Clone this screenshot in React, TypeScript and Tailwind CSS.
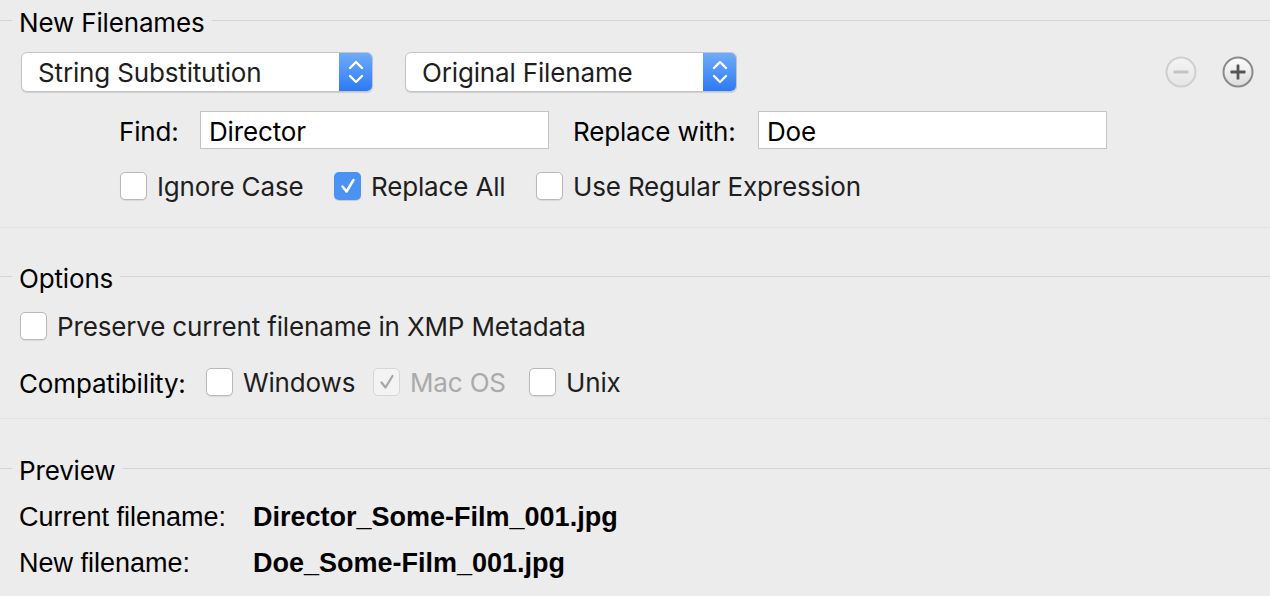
import React from "react";

const ui = { fontFamily: "Inter, 'Noto Sans', sans-serif", letterSpacing: "-0.006em" };
const hel = { fontFamily: "'Liberation Sans', Arial, sans-serif" };

function SectionHeader({ title }: { title: string }) {
  return (
    <div className="flex h-[40px] items-center">
      <div className="h-px w-[12px] bg-[#d5d5d5]" />
      <span className="px-[7px] pt-[6px] text-[26px] leading-[34px] text-black" style={ui}>
        {title}
      </span>
      <div className="h-px flex-1 bg-[#d5d5d5]" />
    </div>
  );
}

function Popup({ label, width }: { label: string; width: string }) {
  return (
    <div
      className={`flex h-[40px] ${width} overflow-hidden rounded-[6px] border border-[#c4c4c4] bg-white shadow-[0_1px_1px_rgba(0,0,0,0.12)]`}
    >
      <div className="flex flex-1 items-center pl-[16px] pt-[1px] text-[26px] text-[#1e1e1e]" style={ui}>
        {label}
      </div>
      <div className="flex w-[33px] items-center justify-center bg-gradient-to-b from-[#6eabf9] to-[#2b79f5]">
        <svg width="16" height="26" viewBox="0 0 16 26" fill="none">
          <path d="M2 9 L8 3 L14 9" stroke="white" strokeWidth="2.4" strokeLinecap="round" strokeLinejoin="round" />
          <path d="M2 17 L8 23 L14 17" stroke="white" strokeWidth="2.4" strokeLinecap="round" strokeLinejoin="round" />
        </svg>
      </div>
    </div>
  );
}

function Checkbox({ checked, disabled }: { checked?: boolean; disabled?: boolean }) {
  if (checked && !disabled) {
    return (
      <div className="flex h-[28px] w-[27px] shrink-0 items-center justify-center rounded-[5px] bg-[#4b92f4] shadow-[0_1px_1px_rgba(0,0,0,0.15)]">
        <svg width="20" height="20" viewBox="0 0 20 20" fill="none">
          <path d="M4.5 10.5 L8.5 15.5 L15.5 4" stroke="white" strokeWidth="2.5" strokeLinecap="round" strokeLinejoin="round" />
        </svg>
      </div>
    );
  }
  return (
    <div
      className={`flex h-[28px] w-[27px] shrink-0 items-center justify-center rounded-[5px] border ${
        disabled ? "border-[#d6d6d6] bg-[#f3f3f3]" : "border-[#b9b9b9] bg-white shadow-[0_1px_1px_rgba(0,0,0,0.08)]"
      }`}
    >
      {checked && (
        <svg width="20" height="20" viewBox="0 0 20 20" fill="none">
          <path d="M4.5 10.5 L8.5 15.5 L15.5 4" stroke="#a6a6a6" strokeWidth="2.2" strokeLinecap="round" strokeLinejoin="round" />
        </svg>
      )}
    </div>
  );
}

function CheckItem({
  label,
  checked,
  disabled,
  width,
}: {
  label: string;
  checked?: boolean;
  disabled?: boolean;
  width?: string;
}) {
  return (
    <div className={`flex items-center ${width ?? ""}`}>
      <Checkbox checked={checked} disabled={disabled} />
      <span
        className={`ml-[10px] whitespace-nowrap pt-[2px] text-[26px] leading-[28px] ${disabled ? "text-[#aaaaaa]" : "text-[#1e1e1e]"}`}
        style={ui}
      >
        {label}
      </span>
    </div>
  );
}

function CircleButton({ plus }: { plus?: boolean }) {
  const ring = plus ? "#8a8a8a" : "#cfcfcf";
  const sym = plus ? "#555555" : "#c4c4c4";
  return (
    <svg width="32" height="32" viewBox="0 0 32 32">
      <defs>
        <linearGradient id={plus ? "gp" : "gm"} x1="0" y1="0" x2="0" y2="1">
          <stop offset="0" stopColor={plus ? "#fdfdfd" : "#f4f4f4"} />
          <stop offset="1" stopColor={plus ? "#dcdcdc" : "#e6e6e6"} />
        </linearGradient>
      </defs>
      <circle cx="16" cy="16" r="14.5" fill={`url(#${plus ? "gp" : "gm"})`} stroke={ring} strokeWidth="2" />
      <rect x="8.5" y="14.6" width="15" height="2.8" rx="0.6" fill={sym} />
      {plus && <rect x="14.6" y="8.5" width="2.8" height="15" rx="0.6" fill={sym} />}
    </svg>
  );
}

export default function App() {
  return (
    <div className="flex h-[596px] w-[1270px] flex-col overflow-hidden bg-[#ececec]">
      <SectionHeader title="New Filenames" />

      <div className="mt-[12px] flex h-[40px] items-center pl-[21px]">
        <Popup label="String Substitution" width="w-[352px]" />
        <div className="ml-[32px]">
          <Popup label="Original Filename" width="w-[332px]" />
        </div>
        <div className="ml-auto mr-[16px] flex items-center gap-[25px]">
          <CircleButton />
          <CircleButton plus />
        </div>
      </div>

      <div className="mt-[19px] flex h-[38px] items-center pl-[119px]">
        <span className="w-[81px] pt-[2px] text-[26px] text-black" style={ui}>
          Find:
        </span>
        <div className="flex h-[38px] w-[349px] items-center border border-[#c3c3c3] bg-white pl-[8px] pt-[3px] text-[26px] text-black" style={ui}>
          Director
        </div>
        <span className="ml-[24px] w-[185px] pt-[2px] text-[26px] text-black" style={ui}>
          Replace with:
        </span>
        <div className="flex h-[38px] w-[349px] items-center border border-[#c3c3c3] bg-white pl-[8px] pt-[3px] text-[26px] text-black" style={ui}>
          Doe
        </div>
      </div>

      <div className="mt-[23px] flex h-[28px] items-center pl-[120px]">
        <CheckItem label="Ignore Case" width="w-[214px]" />
        <CheckItem label="Replace All" checked width="w-[202px]" />
        <CheckItem label="Use Regular Expression" />
      </div>

      <div className="mt-[27px] h-px bg-[#e2e2e2]" />

      <div className="mt-[28px]">
        <SectionHeader title="Options" />
      </div>

      <div className="mt-[16px] flex h-[28px] items-center pl-[20px]">
        <CheckItem label="Preserve current filename in XMP Metadata" />
      </div>

      <div className="mt-[28px] flex h-[28px] items-center pl-[19px]">
        <span className="w-[187px] pt-[2px] text-[26px] text-black" style={ui}>
          Compatibility:
        </span>
        <CheckItem label="Windows" width="w-[167px]" />
        <CheckItem label="Mac OS" checked disabled width="w-[156px]" />
        <CheckItem label="Unix" />
      </div>

      <div className="mt-[22px] h-px bg-[#e2e2e2]" />

      <div className="mt-[29px]">
        <SectionHeader title="Preview" />
      </div>

      <div className="mt-[9px] flex h-[40px] items-center pl-[19px] text-[27px] text-black" style={hel}>
        <span className="w-[234px]">Current filename:</span>
        <span className="font-bold">Director_Some-Film_001.jpg</span>
      </div>
      <div className="mt-[5px] flex h-[40px] items-center pl-[19px] pt-[2px] text-[27px] text-black" style={hel}>
        <span className="w-[234px]">New filename:</span>
        <span className="font-bold">Doe_Some-Film_001.jpg</span>
      </div>
    </div>
  );
}
